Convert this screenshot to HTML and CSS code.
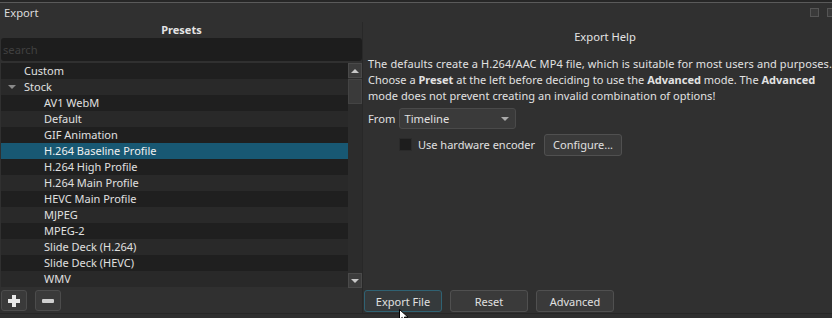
FILE: index.html
```html
<!DOCTYPE html>
<html>
<head>
<meta charset="utf-8">
<link rel="stylesheet" href="styles.css">
</head>
<body>
<div class="window">
  <div class="titlebar">
    <span class="title">Export</span>
    <span class="dock-btns"><span class="dock-btn"></span><span class="dock-btn"></span></span>
  </div>
  <div class="main">
    <div class="presets">
      <div class="panel-head">Presets</div>
      <div class="search"><span class="placeholder">search</span></div>
      <div class="listwrap">
        <ul class="list">
          <li class="row dark lvl0">Custom</li>
          <li class="row light lvl0"><span class="caret"></span>Stock</li>
          <li class="row dark lvl1">AV1 WebM</li>
          <li class="row light lvl1">Default</li>
          <li class="row dark lvl1">GIF Animation</li>
          <li class="row sel lvl1">H.264 Baseline Profile</li>
          <li class="row dark lvl1">H.264 High Profile</li>
          <li class="row light lvl1">H.264 Main Profile</li>
          <li class="row dark lvl1">HEVC Main Profile</li>
          <li class="row light lvl1">MJPEG</li>
          <li class="row dark lvl1">MPEG-2</li>
          <li class="row light lvl1">Slide Deck (H.264)</li>
          <li class="row dark lvl1">Slide Deck (HEVC)</li>
          <li class="row light lvl1">WMV</li>
        </ul>
        <div class="scrollbar">
          <div class="sb-btn"><span class="arrow-up"></span></div>
          <div class="sb-track"><div class="sb-thumb"></div></div>
          <div class="sb-btn"><span class="arrow-down"></span></div>
        </div>
      </div>
      <div class="tools">
        <button class="tool"><svg width="14" height="14" viewBox="0 0 14 14"><path d="M5 1h4v4h4v4H9v4H5V9H1V5h4z" fill="#e8e8e8"/></svg></button>
        <button class="tool"><svg width="14" height="14" viewBox="0 0 14 14"><rect x="1" y="5" width="12" height="4" rx="1" fill="#cfcfcf"/></svg></button>
      </div>
    </div>
    <div class="help">
      <div class="help-head">Export Help</div>
      <p class="help-text"><span class="l1">The defaults create a H.264/AAC MP4 file, which is suitable for most users and purposes.</span><br><span class="l2">Choose a <b>Preset</b> at the left before deciding to use the <b>Advanced</b> mode. The <b>Advanced</b></span><br><span class="l3">mode does not prevent creating an invalid combination of options!</span></p>
      <div class="from-row">
        <span class="label">From</span>
        <div class="combo"><span>Timeline</span><span class="arrow-down combo-arrow"></span></div>
      </div>
      <div class="hw-row">
        <span class="check"></span>
        <span class="label">Use hardware encoder</span>
        <button class="btn configure">Configure...</button>
      </div>
      <div class="spacer"></div>
      <div class="actions">
        <button class="btn action focus">Export File</button>
        <button class="btn action">Reset</button>
        <button class="btn action">Advanced</button>
      </div>
    </div>
  </div>
  <div class="bottomline"></div>
  <svg class="cursor" width="12" height="12" viewBox="0 0 12 12"><path d="M0.5 0.5V11L3.2 8.4L5 12H7L5.3 8.1H9Z" fill="#fff" stroke="#000" stroke-width="1"/></svg>
</div>
</body>
</html>
```
FILE: styles.css
```css
* { box-sizing: border-box; }
html, body { margin: 0; padding: 0; }
body {
  width: 832px;
  height: 318px;
  background: #303030;
  color: #dcdcdc;
  font-family: "Noto Sans", "DejaVu Sans", sans-serif;
  font-size: 11px;
  overflow: hidden;
}
.window {
  height: 318px;
  display: flex;
  flex-direction: column;
  border-top: 3px solid #262626;
  position: relative;
}
.window::before {
  content: "";
  position: absolute;
  left: 0; right: 0; top: -1px;
  height: 1px;
  background: #5a5a5a;
}
.titlebar {
  height: 19px;
  display: flex;
  align-items: center;
  justify-content: space-between;
  padding: 0 0 0 4px;
}
.title { line-height: 16px; font-size: 11.2px; }
.dock-btns { display: flex; gap: 8px; margin-right: -4px; }
.dock-btn {
  width: 9px; height: 9px;
  border: 1px solid #555;
  background: #3a3a3a;
}
.main {
  flex: 1;
  display: flex;
  min-height: 0;
}
.presets {
  flex: 0 0 362px;
  width: 362px;
  display: flex;
  flex-direction: column;
  padding-left: 1px;
}
.panel-head {
  text-align: center;
  font-weight: bold;
  height: 16px;
  line-height: 16px;
  color: #e4e4e4;
}
.search {
  height: 23px;
  background: #1d1d1d;
  border-radius: 3px;
  padding-left: 2px;
  line-height: 23px;
  margin-bottom: 2px;
  font-size: 11.2px;
}
.placeholder { color: #404040; }
.listwrap {
  height: 225px;
  display: flex;
}
.list {
  list-style: none;
  margin: 0;
  padding: 0;
  flex: 1;
}
.row {
  height: 16px;
  line-height: 16px;
  white-space: nowrap;
  color: #e0e0e0;
}
.dark { background: #1f1f1f; }
.light { background: #292929; }
.sel { background: #185873; color: #f0f0f0; }
.lvl0 { padding-left: 23px; position: relative; }
.lvl1 { padding-left: 43px; }
.caret {
  position: absolute;
  left: 7px;
  top: 6px;
  border-left: 4px solid transparent;
  border-right: 4px solid transparent;
  border-top: 4px solid #8a8a8a;
}
.scrollbar {
  width: 14px;
  display: flex;
  flex-direction: column;
  background: #2a2a2a;
}
.sb-btn {
  height: 15px;
  background: #3c3c3c;
  border: 1px solid #4a4a4a;
  display: flex;
  align-items: center;
  justify-content: center;
}
.sb-track { flex: 1; background: #2c2c2c; padding-top: 1px; }
.sb-thumb {
  height: 25px;
  background: #3a3a3a;
  border: 1px solid #444;
}
.arrow-up {
  width: 0; height: 0;
  border-left: 4px solid transparent;
  border-right: 4px solid transparent;
  border-bottom: 4px solid #c8c8c8;
}
.arrow-down {
  width: 0; height: 0;
  border-left: 4px solid transparent;
  border-right: 4px solid transparent;
  border-top: 4px solid #c8c8c8;
}
.tools {
  display: flex;
  gap: 8px;
  margin-top: 2px;
  height: 21px;
}
.tool {
  width: 26px;
  height: 21px;
  padding: 0;
  background: #3a3a3a;
  border: 1px solid #4c4c4c;
  border-radius: 3px;
  display: flex;
  align-items: center;
  justify-content: center;
}
.help {
  flex: 1;
  min-width: 0;
  overflow: hidden;
  display: flex;
  flex-direction: column;
  border-left: 1px solid #282828;
  padding-left: 5px;
}
.help-head {
  text-align: center;
  padding-left: 10px;
  height: 29px;
  line-height: 29px;
  color: #e4e4e4;
  font-size: 11.2px;
}
.help-text {
  margin: 5px 0 0 0;
  line-height: 16px;
  color: #e2e2e2;
  white-space: nowrap;
  font-size: 11px;
}
.help-text b { font-weight: bold; }
.l1 { letter-spacing: 0.1px; }
.l3 { letter-spacing: 0.05px; }
.from-row {
  display: flex;
  align-items: center;
  margin-top: 4px;
  height: 21px;
  font-size: 11.2px;
}
.label { color: #e0e0e0; }
.combo {
  margin-left: 4px;
  width: 117px;
  height: 21px;
  background: #3a3a3a;
  border: 1px solid #4a4a4a;
  border-radius: 3px;
  display: flex;
  align-items: center;
  justify-content: space-between;
  padding: 0 6px 0 4px;
  color: #e0e0e0;
}
.combo-arrow { border-top-color: #aaa; }
.hw-row {
  display: flex;
  align-items: center;
  margin-top: 5px;
  padding-left: 31px;
  height: 21px;
}
.check {
  width: 13px;
  height: 13px;
  background: #1d1d1d;
  border: 1px solid #2a2a2a;
  margin-right: 6px;
}
.btn {
  font-family: inherit;
  font-size: 11px;
  color: #e0e0e0;
  background: #3a3a3a;
  border: 1px solid #505050;
  border-radius: 3px;
  height: 22px;
  padding: 0;
}
.configure { margin-left: 9px; width: 78px; }
.spacer { flex: 1; }
.actions {
  display: flex;
  gap: 8px;
  margin-left: -4px;
  height: 22px;
  margin-bottom: 1px;
}
.action { width: 78px; }
.focus { background: #353a3c; border-color: #2f6273; }
.bottomline {
  height: 5px;
  border-top: 1px solid #262626;
  background: #2e2e2e;
}
.cursor {
  position: absolute;
  left: 399px;
  top: 306px;
}
```
